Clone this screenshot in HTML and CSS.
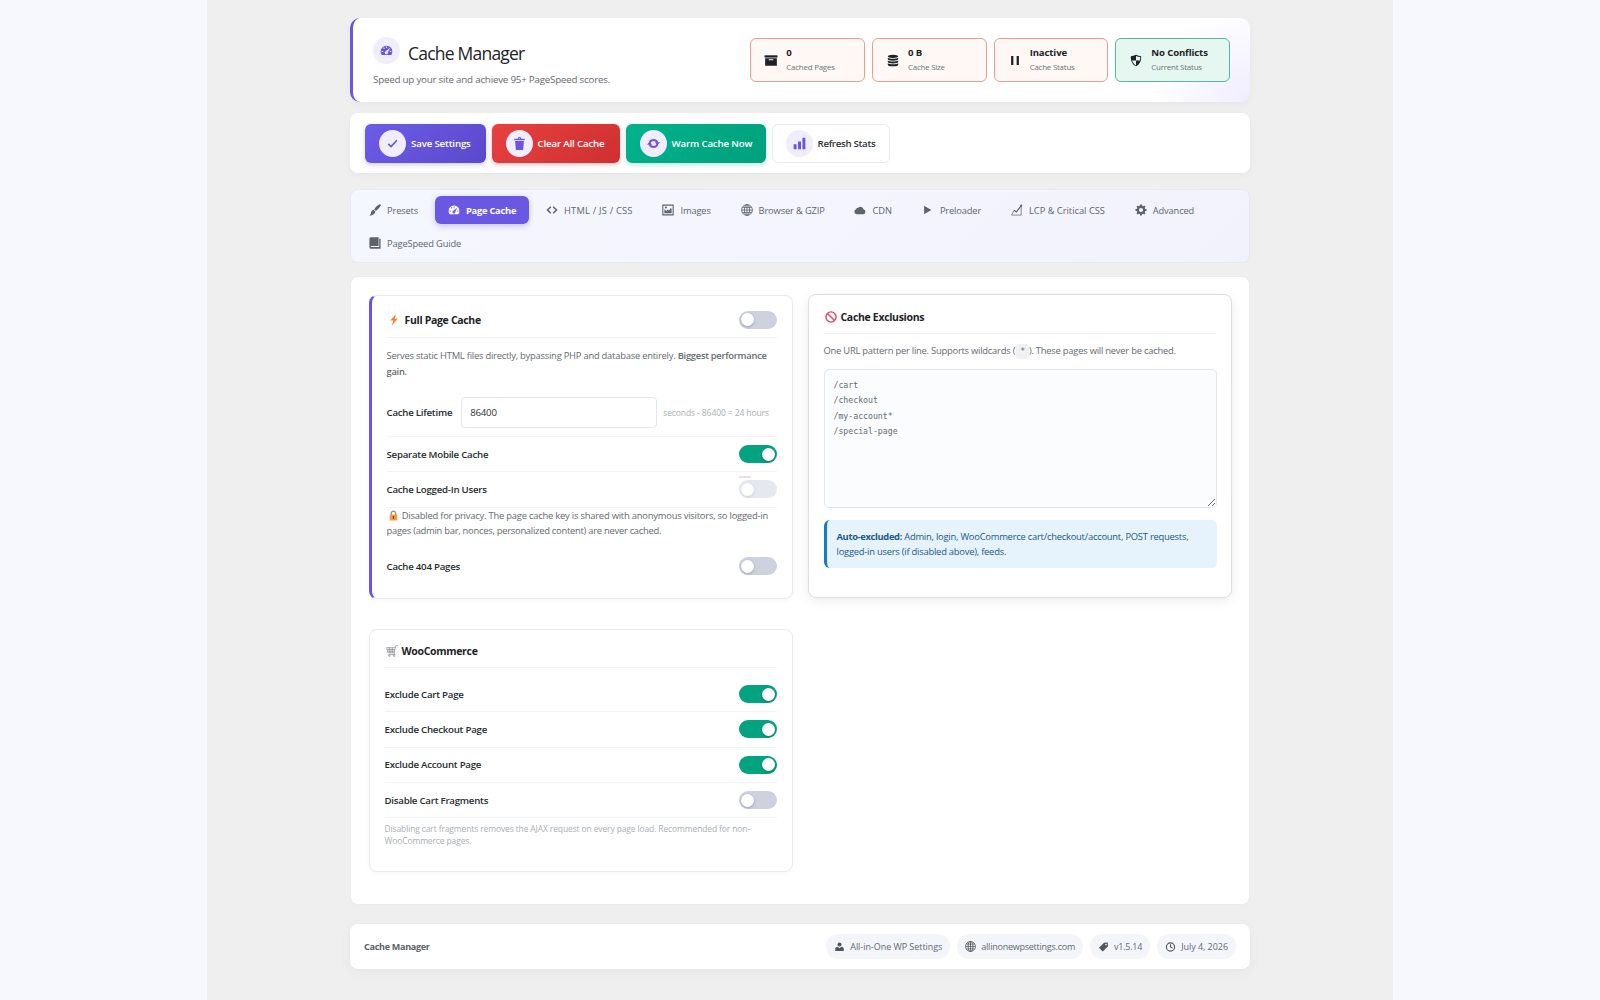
FILE: index.html
```
<!DOCTYPE html>
<html lang="en">
<head>
    <meta charset="UTF-8">
    <meta name="viewport" content="width=device-width, initial-scale=1.0">
    <title>Cache Manager</title>
    <link rel="stylesheet" href="styles.css">
</head>
<body>
    <!-- Shared icons -->
    <svg class="sprite" xmlns="http://www.w3.org/2000/svg">
        <symbol id="i-gauge" viewBox="0 0 20 20">
            <path fill-rule="evenodd" d="M10 2.5A9 9 0 0 0 1 11.500c0 2 .6 3.900 1.700 5.500h14.600A9.500 9.500 0 0 0 19 11.500a9 9 0 0 0-9-9zM9.200 4h1.600v2.200H9.200zM4.700 6.200l1.200-1.100 1.500 1.600-1.200 1.100zM2.600 10.700h2.300v1.600H2.600zM15.100 10.700h2.300v1.600h-2.300zM15.800 5.300l-3.700 7.600a2.400 2.400 0 1 1-3.200-1.800z"/>
        </symbol>
        <symbol id="i-archive" viewBox="0 0 20 20">
            <path d="M0 2h20v3.500H0z"/>
            <path fill-rule="evenodd" d="M1 6.500h18V18H1zM6.500 8v1.600h7V8z"/>
        </symbol>
        <symbol id="i-database" viewBox="0 0 20 20">
            <path d="M10 1c4.400 0 8 1.100 8 2.600S14.400 6.200 10 6.200 2 5.100 2 3.600 5.600 1 10 1zM2 5.600c1.600 1 4.500 1.700 8 1.700s6.400-.7 8-1.700v2.200c0 1.400-3.600 2.500-8 2.500S2 9.200 2 7.800zM2 9.900c1.600 1 4.500 1.600 8 1.600s6.400-.6 8-1.600V12c0 1.400-3.600 2.500-8 2.500S2 13.400 2 12zM2 14.100c1.600 1 4.500 1.600 8 1.600s6.400-.6 8-1.600v2.300c0 1.400-3.600 2.600-8 2.600s-8-1.200-8-2.600z"/>
        </symbol>
        <symbol id="i-pause" viewBox="0 0 20 20">
            <path d="M4 3h3.500v14H4zM12.500 3H16v14h-3.500z"/>
        </symbol>
        <symbol id="i-shield" viewBox="0 0 20 20">
            <path fill-rule="evenodd" d="M10 1c2.600 1.500 5.300 2.300 8 2.400C18.200 10.500 15.800 16 10 19 4.200 16 1.800 10.500 2 3.400 4.700 3.300 7.400 2.500 10 1zM10 3v7h6c.4-1.600.6-3.300.6-5.200C14.300 4.600 12.100 4 10 3zM10 10H4c.9 3.300 2.900 5.800 6 7.500z"/>
        </symbol>
        <symbol id="i-check" viewBox="0 0 20 20">
            <path d="M3.500 10.500l4.300 4.300 9-9.800" fill="none" stroke="currentColor" stroke-width="2.600"/>
        </symbol>
        <symbol id="i-trash" viewBox="0 0 20 20">
            <path fill-rule="evenodd" d="M7.500 2.500C7.500 1 8.500 0 10 0s2.500 1 2.500 2.500H18V5H2V2.500zM9 2.500h2C11 1.800 10.600 1.400 10 1.400s-1 .4-1 1.100zM3.200 6h13.600L15.500 20h-11z"/>
        </symbol>
        <symbol id="i-sync" viewBox="0 0 20 20">
            <g fill="none" stroke="currentColor" stroke-width="3"><path d="M4 8.500A6.500 6.500 0 0 1 16 8.500M16 11.500A6.500 6.500 0 0 1 4 11.500"/></g>
            <path d="M12 8h8l-4 4.800zM8 12H0l4-4.800z"/>
        </symbol>
        <symbol id="i-bars" viewBox="0 0 20 20">
            <path d="M1 11h4.500v8H1zM7.800 7h4.500v12H7.800zM14.500 1H19v18h-4.500z"/>
        </symbol>
        <symbol id="i-brush" viewBox="0 0 20 20">
            <path d="M19.200.8c.8.900.3 2.300-.8 3.800-1.700 2.300-4.300 5-7 7L8.600 8.800C10.800 6 13.300 3.300 15.400 1.700c1.500-1.200 3-1.700 3.800-.9zM7.700 9.700l2.800 2.800c.2 3-3.600 6.700-9.900 6.700 2-1.400 2.300-2.900 2.800-5 .5-2.300 2-4.200 4.300-4.500z"/>
        </symbol>
        <symbol id="i-code" viewBox="0 0 20 20">
            <path d="M8 4.500L2.500 10 8 15.500M12 4.500l5.500 5.500-5.500 5.500" fill="none" stroke="currentColor" stroke-width="2.500"/>
        </symbol>
        <symbol id="i-image" viewBox="0 0 20 20">
            <path fill-rule="evenodd" d="M.5 1h19v18H.5zM2.300 2.800v14.400h15.400V2.800z"/>
            <path d="M4 15.500V8.500l3.200 3 2.300-2.400 2 2 3-4.600L16 8.500v7z"/>
            <circle cx="6.500" cy="6" r="1.700"/>
        </symbol>
        <symbol id="i-globe" viewBox="0 0 20 20">
            <g fill="none" stroke="currentColor" stroke-width="1.400"><circle cx="10" cy="10" r="9"/><ellipse cx="10" cy="10" rx="4.300" ry="9"/><path d="M10 1v18M1 10h18M2.500 5.700h15M2.500 14.300h15"/></g>
        </symbol>
        <symbol id="i-cloud" viewBox="0 0 20 20">
            <path d="M4.500 17a4.200 4.200 0 0 1-1-8.200 3 3 0 0 1 3.700-2.500A5 5 0 0 1 15.800 8.600 4.300 4.300 0 0 1 15.500 17z"/>
        </symbol>
        <symbol id="i-play" viewBox="0 0 20 20">
            <path d="M3.500 3l12 7-12 7z"/>
        </symbol>
        <symbol id="i-chart" viewBox="0 0 20 20">
            <path d="M1 18.500l4-8 4 3 4-6 4-5V18.500z" fill="none" stroke="currentColor" stroke-width="1.200"/>
            <path d="M5 10.500l4 2.500 4-5 4-5" fill="none" stroke="currentColor" stroke-width="1.800"/>
            <circle cx="17" cy="2.500" r="1.800"/>
        </symbol>
        <symbol id="i-gear" viewBox="0 0 20 20">
            <circle cx="10" cy="10" r="5.400" fill="none" stroke="currentColor" stroke-width="3.800"/>
            <path d="M10 .8v4M10 15.200v4M.8 10h4M15.200 10h4M3.500 3.500l2.800 2.800M13.700 13.700l2.800 2.800M3.500 16.500l2.800-2.800M13.700 6.300l2.800-2.800" stroke="currentColor" stroke-width="3.400"/>
        </symbol>
        <symbol id="i-book" viewBox="0 0 20 20">
            <path d="M3 .5h13v14.300H3.500c-1.100 0-1.100 1.700 0 1.700H17V3h2.300v16.500H3.500C1.800 19.500.7 18.500.7 17V3C.7 1.600 1.600.5 3 .5z"/>
        </symbol>
        <symbol id="i-user" viewBox="0 0 20 20">
            <circle cx="10" cy="5" r="4"/>
            <path d="M1.500 18v-4.500C1.500 11 4 9.700 6.500 9.500L10 12.500l3.500-3c2.500.2 5 1.500 5 4V18z"/>
        </symbol>
        <symbol id="i-tag" viewBox="0 0 20 20">
            <path fill-rule="evenodd" d="M11 1.500l7.500-.5.500 7.500L8.500 19 1 11.500zM15 3.500a1.700 1.700 0 1 0 0 3.400 1.700 1.700 0 0 0 0-3.400z"/>
        </symbol>
        <symbol id="i-clock" viewBox="0 0 20 20">
            <g fill="none" stroke="currentColor" stroke-width="2.200"><circle cx="10" cy="10" r="8.200"/><path d="M10 4.500V10l4 2"/></g>
        </symbol>
    </svg>

    <div class="wp-content">
        <div class="wrap">
            <header class="header">
                <div>
                    <div class="title-row">
                        <span class="circle"><svg class="icon"><use href="#i-gauge"/></svg></span>
                        <h1>Cache Manager</h1>
                    </div>
                    <p class="subtitle">Speed up your site and achieve 95+ PageSpeed scores.</p>
                </div>
                <div class="stats">
                    <div class="stat">
                        <svg class="stat-icon"><use href="#i-archive"/></svg>
                        <div><strong>0</strong><span>Cached Pages</span></div>
                    </div>
                    <div class="stat">
                        <svg class="stat-icon"><use href="#i-database"/></svg>
                        <div><strong>0 B</strong><span>Cache Size</span></div>
                    </div>
                    <div class="stat">
                        <svg class="stat-icon"><use href="#i-pause"/></svg>
                        <div><strong>Inactive</strong><span>Cache Status</span></div>
                    </div>
                    <div class="stat good">
                        <svg class="stat-icon"><use href="#i-shield"/></svg>
                        <div><strong>No Conflicts</strong><span>Current Status</span></div>
                    </div>
                </div>
            </header>

            <div class="toolbar">
                <button class="btn save"><span class="circle"><svg class="icon"><use href="#i-check"/></svg></span>Save Settings</button>
                <button class="btn clear"><span class="circle"><svg class="icon"><use href="#i-trash"/></svg></span>Clear All Cache</button>
                <button class="btn warm"><span class="circle"><svg class="icon"><use href="#i-sync"/></svg></span>Warm Cache Now</button>
                <button class="btn refresh"><span class="circle"><svg class="icon"><use href="#i-bars"/></svg></span>Refresh Stats</button>
            </div>

            <nav class="tabs">
                <a class="tab"><svg><use href="#i-brush"/></svg>Presets</a>
                <a class="tab active"><svg><use href="#i-gauge"/></svg>Page Cache</a>
                <a class="tab caps"><svg><use href="#i-code"/></svg>HTML / JS / CSS</a>
                <a class="tab"><svg><use href="#i-image"/></svg>Images</a>
                <a class="tab"><svg><use href="#i-globe"/></svg>Browser &amp; GZIP</a>
                <a class="tab mixed"><svg><use href="#i-cloud"/></svg>CDN</a>
                <a class="tab"><svg><use href="#i-play"/></svg>Preloader</a>
                <a class="tab mixed"><svg><use href="#i-chart"/></svg>LCP &amp; Critical CSS</a>
                <a class="tab"><svg><use href="#i-gear"/></svg>Advanced</a>
                <a class="tab"><svg><use href="#i-book"/></svg>PageSpeed Guide</a>
            </nav>

            <main class="panel">
                <section class="card primary">
                    <div class="card-title">
                        <h2>
                            <svg class="emoji bolt" viewBox="0 0 20 20"><path d="M13 0L4 11h5l-3 9L16 8h-5z"/></svg>
                            Full Page Cache
                        </h2>
                        <span class="toggle"></span>
                    </div>
                    <p class="desc">Serves static HTML files directly, bypassing PHP and database entirely. <b>Biggest performance<br>gain.</b></p>
                    <div class="row lifetime">
                        <label>Cache Lifetime</label>
                        <input type="text" value="86400">
                        <span class="hint">seconds - 86400 = 24 hours</span>
                    </div>
                    <div class="row"><label>Separate Mobile Cache</label><span class="toggle on"></span></div>
                    <div class="row"><label>Cache Logged-In Users</label><span class="toggle disabled"></span></div>
                    <p class="note">
                        <svg class="lock" viewBox="0 0 20 20"><path d="M6 9V6a4 4 0 0 1 8 0v3" fill="none" stroke="#8d9298" stroke-width="2.400"/><rect x="3" y="8" width="14" height="11" rx="1.500" fill="#f5a03c"/><path d="M10 11v5" stroke="#5c3b1c" stroke-width="2.400"/></svg>
                        Disabled for privacy. The page cache key is shared with anonymous visitors, so logged-in<br><span class="tight">pages (admin bar, nonces, personalized content) are never cached.</span></p>
                    <div class="row last"><label>Cache 404 Pages</label><span class="toggle"></span></div>
                </section>

                <section class="card exclusions">
                    <div class="card-title">
                        <h2>
                            <svg class="emoji" viewBox="0 0 20 20"><g fill="none" stroke="#e0455f" stroke-width="2.300"><circle cx="10" cy="10" r="8.500"/><path d="M4 4l12 12"/></g></svg>
                            Cache Exclusions
                        </h2>
                    </div>
                    <p class="desc">One URL pattern per line. Supports wildcards (<code>*</code>). These pages will never be cached.</p>
                    <textarea>/cart
/checkout
/my-account*
/special-page</textarea>
                    <div class="info"><b>Auto-excluded:</b> Admin, login, WooCommerce cart/checkout/account, POST requests,<br>logged-in users (if disabled above), feeds.</div>
                </section>

                <section class="card woo">
                    <div class="card-title">
                        <h2>
                            <svg class="emoji" viewBox="0 0 20 20"><g fill="none" stroke="#8b8e92" stroke-width="1.300"><path d="M1 4.500h14.500l-2 8.500H3.500zM2.500 7.500h12M3 10.300h11M6 4.500l1 8.500M10.500 4.500V13M15.500 4.500L16.500 1h3M13.500 13l1.500 3H4"/><circle cx="5.500" cy="18" r="1.200"/><circle cx="13.500" cy="18" r="1.200"/></g></svg>
                            WooCommerce
                        </h2>
                    </div>
                    <div class="row"><label>Exclude Cart Page</label><span class="toggle on"></span></div>
                    <div class="row"><label>Exclude Checkout Page</label><span class="toggle on"></span></div>
                    <div class="row"><label>Exclude Account Page</label><span class="toggle on"></span></div>
                    <div class="row"><label>Disable Cart Fragments</label><span class="toggle"></span></div>
                    <p class="hint">Disabling cart fragments removes the AJAX request on every page load. Recommended for non-<br>WooCommerce pages.</p>
                </section>
            </main>

            <footer class="footer">
                <strong>Cache Manager</strong>
                <div class="chips">
                    <span class="chip wide"><svg><use href="#i-user"/></svg>All-in-One WP Settings</span>
                    <span class="chip"><svg class="globe"><use href="#i-globe"/></svg>allinonewpsettings.com</span>
                    <span class="chip"><svg><use href="#i-tag"/></svg>v1.5.14</span>
                    <span class="chip wide"><svg><use href="#i-clock"/></svg>July 4, 2026</span>
                </div>
            </footer>
        </div>
    </div>
</body>
</html>
```
FILE: styles.css
```
* {
    box-sizing: border-box;
}
body {
    margin: 0;
    background: #f6f8fd;
    color: #1d2327;
    font-family: "Open Sans", sans-serif;
    font-size: 9.4px;
    overflow: hidden;
}
h1, h2, p {
    margin: 0;
}
svg {
    fill: currentColor;
    flex: none;
}
.sprite {
    display: none;
}
.wp-content {
    width: 1186px;
    height: 1000px;
    margin: 0 auto;
    padding-top: 18px;
    background: #efefef;
}
.wrap {
    width: 900px;
    margin: 0 auto;
}

/* Header */
.header {
    display: flex;
    justify-content: space-between;
    height: 84px;
    padding: 20px 20px 0 20px;
    border-left: 3px solid #6a55dc;
    border-radius: 10px;
    background: radial-gradient(circle at 100% 100%, #f0edff 0, #fff 100px);
    box-shadow: 0 3px 10px rgba(0, 0, 0, 0.04);
}
.title-row {
    display: flex;
    align-items: center;
    gap: 8px;
    height: 25px;
}
.circle {
    display: flex;
    align-items: center;
    justify-content: center;
    width: 27px;
    height: 27px;
    border-radius: 50%;
    background: #f0edff;
    color: #6a55dc;
}
.icon {
    width: 13px;
    height: 13px;
}
h1 {
    padding-top: 4px;
    font-size: 17.5px;
    font-weight: 400;
    letter-spacing: -0.78px;
    line-height: 24px;
}
.subtitle {
    margin-top: 9px;
    color: #646b70;
    font-size: 9.8px;
    letter-spacing: -0.23px;
    line-height: 16px;
}
.stats {
    display: flex;
    gap: 7px;
}
.stat {
    display: flex;
    align-items: center;
    gap: 8px;
    width: 114.7px;
    height: 44px;
    padding-left: 13px;
    border: 1px solid #eb9c8a;
    border-radius: 6px;
    background: #fff8f5;
}
.stat.good {
    border-color: #4cbd98;
    background: #e6f6f1;
}
.stat-icon {
    width: 14px;
    height: 13px;
}
.stat strong, .stat span {
    display: block;
    letter-spacing: -0.13px;
    line-height: 14px;
}
.stat strong {
    font-size: 9.6px;
}
.stat span {
    color: #6c7378;
    font-size: 7.9px;
    letter-spacing: -0.2px;
}

/* Action buttons */
.toolbar {
    display: flex;
    align-items: center;
    gap: 6px;
    height: 60px;
    margin-top: 11px;
    padding: 0 15px;
    border-radius: 8px;
    background: #fff;
    box-shadow: 0 2px 8px rgba(0, 0, 0, 0.04);
}
.btn {
    display: flex;
    align-items: center;
    gap: 5px;
    height: 39px;
    padding: 0 0 0 13px;
    border: 1px solid transparent;
    border-radius: 6px;
    color: #fff;
    font-family: "Open Sans", sans-serif;
    font-size: 9.7px;
    font-weight: 600;
    letter-spacing: -0.16px;
}
.btn.save {
    width: 120.5px;
    background: linear-gradient(135deg, #6c5ce7, #5b49cc) border-box;
    box-shadow: 0 2px 5px rgba(108, 92, 231, 0.3);
}
.btn.clear {
    width: 128px;
    background: linear-gradient(135deg, #e74040, #d03030) border-box;
    box-shadow: 0 2px 5px rgba(214, 48, 49, 0.25);
}
.btn.warm {
    width: 140px;
    background: linear-gradient(135deg, #00b38b, #00a07c) border-box;
    box-shadow: 0 2px 5px rgba(0, 160, 124, 0.25);
}
.btn.refresh {
    width: 118px;
    border-color: #e9ebee;
    background: #fff;
    color: #2d3436;
    letter-spacing: -0.3px;
}

/* Tabs */
.tabs {
    display: flex;
    flex-wrap: wrap;
    align-content: flex-start;
    gap: 5px 4px;
    height: 74px;
    margin-top: 16px;
    padding: 6px 5px 0;
    border: 1px solid #e8eaf0;
    border-radius: 8px;
    background: linear-gradient(135deg, #f5f7fe, #f2f2fd);
}
.tab {
    display: flex;
    align-items: center;
    gap: 6px;
    height: 28px;
    padding: 0 12.8px 0 13px;
    border-radius: 6px;
    color: #5d656a;
    font-size: 9.3px;
    font-weight: 500;
    letter-spacing: -0.13px;
}
.tab svg {
    width: 12px;
    height: 12px;
}
.tab.caps {
    letter-spacing: 0.22px;
}
.tab.mixed {
    letter-spacing: 0;
}
.tab.active {
    background: #6a58e2;
    color: #fff;
    font-weight: 700;
    letter-spacing: -0.22px;
    box-shadow: 0 2px 6px rgba(108, 92, 231, 0.35);
}

/* Cards */
.panel {
    display: grid;
    grid-template-columns: 424px 424px;
    grid-template-rows: 304px 243px;
    gap: 31px 15px;
    height: 629px;
    margin-top: 13px;
    padding: 17px 0 0 17.5px;
    border: 1px solid #ececee;
    border-radius: 8px;
    background: #fff;
}
.card {
    padding: 0 15px;
    border: 1px solid #e8eaec;
    border-radius: 8px;
    background: #fff;
    box-shadow: 0 2px 6px rgba(0, 0, 0, 0.03);
}
.card.primary {
    margin: 1px 0 -1px;
    border-left: 3px solid #6a55dc;
}
.card.exclusions {
    border-color: #d9dfe2;
    box-shadow: 0 3px 12px rgba(0, 0, 0, 0.08);
}
.card-title {
    display: flex;
    align-items: center;
    justify-content: space-between;
    height: 39px;
    border-bottom: 1px solid #eff1f3;
}
.primary .card-title {
    height: 42px;
    padding-top: 6px;
}
.exclusions .card-title {
    padding-top: 5px;
}
.woo .card-title {
    height: 38px;
    margin-bottom: 9px;
    padding-top: 5px;
}
h2 {
    display: flex;
    align-items: center;
    gap: 5px;
    font-size: 10.5px;
    font-weight: 700;
    letter-spacing: -0.32px;
}
.emoji {
    width: 12px;
    height: 12px;
    margin-left: 1px;
}
.exclusions .emoji, .woo .emoji {
    margin-right: -1px;
}
.bolt {
    fill: #f0803c;
}
.desc {
    color: #646b70;
    letter-spacing: -0.23px;
    line-height: 15.5px;
}
.primary .desc {
    margin-top: 10px;
}
.desc b {
    font-weight: 600;
    letter-spacing: -0.27px;
}
.row {
    display: flex;
    align-items: center;
    justify-content: space-between;
    height: 35.3px;
    border-bottom: 1px solid #f1f3f4;
}
.row label {
    color: #262d31;
    font-size: 9.7px;
    font-weight: 600;
    letter-spacing: -0.25px;
}
.row.lifetime {
    justify-content: flex-start;
    height: 48px;
    margin-top: 10px;
}
.row.last {
    border-bottom: 0;
    margin-top: 11px;
}
.row input {
    width: 196px;
    height: 31px;
    margin: 0 6px 0 9px;
    padding: 0 8px;
    border: 1px solid #e4e7ea;
    border-radius: 4px;
    background: #fff;
    color: #2d3436;
    font-family: "Open Sans", sans-serif;
    font-size: 9.7px;
    letter-spacing: -0.25px;
}
.hint {
    color: #a9afb4;
    font-size: 8.5px;
    letter-spacing: -0.1px;
    line-height: 12px;
}
.woo .hint {
    margin-top: 5px;
    letter-spacing: -0.13px;
}
.note {
    color: #646b70;
    letter-spacing: -0.21px;
    line-height: 15px;
    white-space: nowrap;
}
.note .tight {
    letter-spacing: -0.26px;
}
.lock {
    width: 11px;
    height: 11px;
    margin: 0 1px -2px 1px;
}
.toggle {
    display: flex;
    align-items: center;
    width: 38px;
    height: 18px;
    padding: 0 2px;
    border-radius: 9px;
    background: #ccd2de;
}
.toggle::before {
    content: "";
    width: 13px;
    height: 13px;
    border-radius: 50%;
    background: #fff;
    box-shadow: 0 1px 3px rgba(0, 0, 0, 0.25);
}
.toggle.on {
    justify-content: flex-end;
    background: #04a380;
}
.toggle.disabled {
    position: relative;
    opacity: 0.5;
}
.toggle.disabled::after {
    content: "";
    position: absolute;
    top: -4px;
    left: 0;
    width: 12px;
    height: 2px;
    background: #c4c8cc;
}
.exclusions .desc {
    margin-top: 9px;
}
code {
    display: inline-block;
    margin: 0 0 0 1px;
    padding: 0 4px;
    border-radius: 2px;
    background: #f0f1f2;
    font-family: "DejaVu Sans Mono", monospace;
    font-size: 8.2px;
    line-height: 15px;
}
textarea {
    display: block;
    width: 393px;
    height: 139px;
    margin-top: 10px;
    padding: 8px 9px;
    border: 1px solid #e2e6ea;
    border-radius: 5px;
    background: #fafcfe;
    color: #646b70;
    font-family: "DejaVu Sans Mono", monospace;
    font-size: 8.2px;
    line-height: 15.3px;
}
.info {
    width: 393px;
    height: 48px;
    margin-top: 12px;
    padding: 8.5px 10px;
    border-left: 3px solid #1479cf;
    border-radius: 6px;
    background: #e6f2fc;
    color: #205a8c;
    letter-spacing: -0.23px;
    line-height: 15.7px;
}
.info b {
    letter-spacing: -0.35px;
}

/* Footer */
.footer {
    display: flex;
    align-items: center;
    justify-content: space-between;
    height: 45px;
    margin-top: 19px;
    padding: 0 14px;
    border-radius: 8px;
    background: #fff;
    color: #5a6268;
    font-size: 9px;
    box-shadow: 0 3px 12px rgba(0, 0, 0, 0.05);
}
.footer strong {
    letter-spacing: -0.27px;
}
.chips {
    display: flex;
    gap: 7px;
}
.chip {
    display: flex;
    align-items: center;
    gap: 5px;
    height: 25px;
    padding: 0 8px;
    border-radius: 12px;
    background: #f3f5fb;
    color: #646b70;
    letter-spacing: -0.24px;
}
.chip.wide {
    letter-spacing: -0.05px;
}
.chip svg {
    width: 11px;
    height: 10px;
    color: #50575c;
}
.chip .globe {
    height: 11px;
}
```
